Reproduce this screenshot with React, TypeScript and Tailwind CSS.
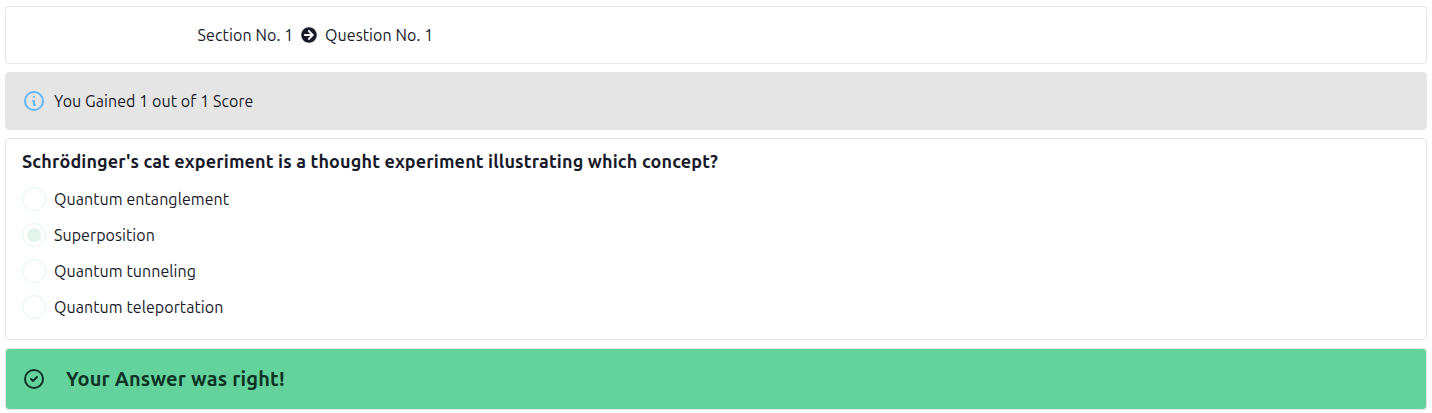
import React from "react";

const options = ["Quantum entanglement", "Superposition", "Quantum tunneling", "Quantum teleportation"];

export default function App() {
  return (
    <main className="flex h-[413px] flex-col gap-2 overflow-hidden bg-white px-[5px] pt-1.5 font-[Ubuntu,'Noto_Sans',sans-serif] text-base tracking-[0.075px] text-[#181a2a]">
      <header className="flex h-[58px] shrink-0 items-center rounded border border-[#e5e6e6] pl-[191px]">
        <span className="w-24 pl-[0.5px] tracking-[0.12px] whitespace-nowrap">Section No. 1</span>
        <svg viewBox="0 0 512 512" className="mx-2 size-4" fill="currentColor">
          <path d="M256 8c137 0 248 111 248 248S393 504 256 504 8 393 8 256 119 8 256 8zm-28.900 143.600l75.500 72.400H120c-13.300 0-24 10.700-24 24v16c0 13.300 10.700 24 24 24h182.600l-75.500 72.400c-9.700 9.300-9.900 24.800-.4 34.300l11 10.900c9.400 9.400 24.600 9.400 33.900 0L404.300 273c9.400-9.400 9.400-24.600 0-33.900L271.600 106.300c-9.400-9.400-24.600-9.400-33.900 0l-11 10.900c-9.500 9.600-9.300 25.100.4 34.400z" />
        </svg>
        <span className="tracking-[0.1px] whitespace-nowrap">Question No. 1</span>
      </header>

      <section className="flex h-[58px] shrink-0 items-center gap-2 rounded border border-[#e5e6e6] bg-[#e5e5e5] px-4">
        <svg viewBox="0 0 24 24" className="size-6" fill="none" stroke="#66b8f5" strokeWidth="2" strokeLinecap="round" strokeLinejoin="round">
          <path d="M13 16h-1v-4h-1m1-4h.01M21 12a9 9 0 11-18 0 9 9 0 0118 0z" />
        </svg>
        <span className="whitespace-nowrap">You Gained 1 out of 1 Score</span>
      </section>

      <section className="h-[202px] shrink-0 rounded border border-[#e5e6e6] px-4 pt-2">
        <h2 className="text-lg font-bold tracking-[0.14px] whitespace-nowrap">
          Schrödinger's cat experiment is a thought experiment illustrating which concept?
        </h2>
        <div className="mt-3 flex flex-col gap-3">
          {options.map((option, index) => (
            <label key={option} className="flex h-6 items-center gap-2">
              <span className="flex size-6 items-center justify-center rounded-full border border-[#e4f4ed]">
                {index === 1 && <span className="size-3.5 rounded-full bg-[#e4f4ed]" />}
              </span>
              <span className="whitespace-nowrap">{option}</span>
            </label>
          ))}
        </div>
      </section>

      <footer className="flex h-[62px] shrink-0 items-center gap-5 rounded border border-[#e5e6e6] bg-[#64d29d] px-4 text-[#0c3323]">
        <svg viewBox="0 0 24 24" className="size-6" fill="none" stroke="currentColor" strokeWidth="2" strokeLinecap="round" strokeLinejoin="round">
          <path d="M9 12l2 2 4-4m6 2a9 9 0 11-18 0 9 9 0 0118 0z" />
        </svg>
        <strong className="text-xl font-bold tracking-[0.16px] whitespace-nowrap">Your Answer was right!</strong>
      </footer>
    </main>
  );
}
